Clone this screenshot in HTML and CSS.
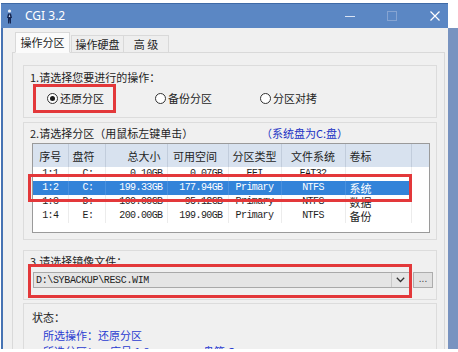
FILE: index.html
```html
<!DOCTYPE html>
<html lang="zh-CN">
<head>
<meta charset="utf-8">
<title>CGI 3.2</title>
<link rel="stylesheet" href="styles.css">
</head>
<body>
<div class="window">
  <div class="titlebar">
    <svg class="app-icon" width="9" height="15" viewBox="0 0 9 15">
      <circle cx="4.5" cy="2" r="1.6" fill="#e8eef8"/>
      <path d="M3 4.5 L6 4.5 L7 9 L6 9 L6 14.5 L4.8 14.5 L4.5 10 L4.2 14.5 L3 14.5 L3 9 L2 9 Z" fill="#14244f"/>
      <path d="M4.5 5 L5.3 8 L3.7 8 Z" fill="#c9d6ee"/>
    </svg>
    <span class="title">CGI 3.2</span>
    <div class="controls">
      <svg class="ctl ctl-min" width="10" height="10" viewBox="0 0 10 10"><path d="M0 5.5 H10" stroke="#d9e3f3" stroke-width="1"/></svg>
      <svg class="ctl ctl-max" width="10" height="10" viewBox="0 0 10 10"><rect x="0.5" y="0.5" width="9" height="9" fill="none" stroke="#86a4d2" stroke-width="1"/></svg>
      <svg class="ctl ctl-close" width="10" height="10" viewBox="0 0 10 10"><path d="M0.5 0.5 L9.5 9.5 M9.5 0.5 L0.5 9.5" stroke="#ffffff" stroke-width="1.2"/></svg>
    </div>
  </div>
  <div class="client">
    <div class="tabs">
      <div class="tab tab-active">操作分区</div>
      <div class="tab tab-2">操作硬盘</div>
      <div class="tab tab-3">高 级</div>
    </div>
    <div class="panel">
      <div class="group g1">
        <div class="label">1.请选择您要进行的操作：</div>
        <div class="radios">
          <div class="radio"><span class="dot on"></span><span class="rtext">还原分区</span></div>
          <div class="radio"><span class="dot"></span><span class="rtext">备份分区</span></div>
          <div class="radio"><span class="dot"></span><span class="rtext">分区对拷</span></div>
        </div>
        <div class="mark mark1"></div>
      </div>

      <div class="group g2">
        <div class="label label2"><span class="l2a">2.请选择分区（用鼠标左键单击）</span><span class="blue">（系统盘为C:盘）</span></div>
        <div class="listview">
          <table>
            <colgroup>
              <col class="w1"><col class="w2"><col class="w3"><col class="w4"><col class="w5"><col class="w6"><col class="w7"><col class="w8">
            </colgroup>
            <thead>
              <tr><th class="c1">序号</th><th class="c2">盘符</th><th class="c3">总大小</th><th class="c4">可用空间</th><th class="c5">分区类型</th><th class="c6">文件系统</th><th class="c7">卷标</th><th class="c8"></th></tr>
            </thead>
            <tbody>
              <tr><td class="c1">1:1</td><td class="c2">C:</td><td class="c3">0.10GB</td><td class="c4">0.07GB</td><td class="c5">EFI</td><td class="c6">FAT32</td><td class="c7"></td><td class="c8"></td></tr>
              <tr class="sel"><td class="c1">1:2</td><td class="c2">C:</td><td class="c3">199.33GB</td><td class="c4">177.94GB</td><td class="c5">Primary</td><td class="c6">NTFS</td><td class="c7 cjk">系统</td><td class="c8 blank"></td></tr>
              <tr><td class="c1">1:3</td><td class="c2">D:</td><td class="c3">100.00GB</td><td class="c4">95.12GB</td><td class="c5">Primary</td><td class="c6">NTFS</td><td class="c7 cjk">数据</td><td class="c8"></td></tr>
              <tr><td class="c1">1:4</td><td class="c2">E:</td><td class="c3">200.00GB</td><td class="c4">199.90GB</td><td class="c5">Primary</td><td class="c6">NTFS</td><td class="c7 cjk">备份</td><td class="c8"></td></tr>
            </tbody>
          </table>
        </div>
        <div class="mark mark2"></div>
      </div>

      <div class="group g3">
        <div class="label label3">3.请选择镜像文件：</div>
        <div class="comborow">
          <div class="combo">
            <span class="combotext">D:\SYBACKUP\RESC.WIM</span>
            <span class="arrow"><svg width="9" height="6" viewBox="0 0 9 6"><path d="M0.8 0.8 L4.5 4.5 L8.2 0.8" fill="none" stroke="#333" stroke-width="1.3"/></svg></span>
          </div>
          <div class="browse">...</div>
        </div>
        <div class="mark mark3"></div>
      </div>

      <div class="group g4">
        <div class="label">状态：</div>
        <div class="status">所选操作：还原分区</div>
        <div class="status status2"><span class="s1">所选分区：</span><span class="s2">序号 1:2</span><span>盘符 C:</span></div>
      </div>
    </div>
  </div>
</div>
</body>
</html>
```

FILE: styles.css
```css
html, body {
  margin: 0;
  padding: 0;
  width: 458px;
  height: 352px;
  overflow: hidden;
  background: #ffffff;
}

body {
  font-family: "Noto Sans CJK SC", "Noto Sans", sans-serif;
  font-size: 11px;
  color: #1e1e1e;
}

.window {
  margin: 3px 0 0 1px;
  width: 457px;
  display: flex;
  flex-direction: column;
}

.titlebar {
  height: 25px;
  box-sizing: border-box;
  margin-right: 10px;
  background: #5b87c4;
  border-top: 1px solid #3f6aa6;
  display: flex;
  align-items: center;
  color: #ffffff;
}

.app-icon {
  margin-left: 4px;
  flex: none;
}

.title {
  margin-left: 11px;
  font-family: "Noto Sans", sans-serif;
  font-size: 12px;
  line-height: 14px;
}

.controls {
  margin-left: auto;
  display: flex;
  align-items: center;
  margin-right: 8px;
}

.ctl { display: block; }
.ctl-max { margin-left: 32px; }
.ctl-close { margin-left: 33px; }

.client {
  background: #f0f0f0;
  border-left: 2px solid #4673b3;
  border-right: 10px solid #7893c0;
  height: 321px;
  overflow: hidden;
}

.tabs {
  display: flex;
  align-items: flex-end;
  padding: 5px 0 0 12px;
  height: 20px;
  box-sizing: content-box;
  margin-bottom: -1px;
  position: relative;
  z-index: 1;
}

.tab {
  height: 16px;
  line-height: 16px;
  border: 1px solid #d9d9d9;
  border-bottom: 1px solid #d9d9d9;
  background: #eeeeee;
  text-align: center;
  color: #1e1e1e;
}

.tab-active {
  width: 53px;
  height: 19px;
  line-height: 18px;
  background: #fbfbfb;
  border-bottom-color: #fbfbfb;
  margin-right: 1px;
}

.tab-2 { width: 51px; margin-right: -1px; }
.tab-3 { width: 44px; }

.panel {
  margin: 0 3px 0 9px;
  border: 1px solid #d9d9d9;
  background: #f0f0f0;
  padding: 12px 7px 0 10px;
  height: 300px;
}

.group {
  border: 1px solid #dcdcdc;
  position: relative;
}

.label {
  line-height: 14px;
  height: 14px;
  white-space: nowrap;
}

.g1 {
  padding: 4px 0 12px 6px;
}

.radios {
  margin-top: 7px;
  padding-left: 16px;
  display: grid;
  grid-template-columns: 108px 105px auto;
  height: 14px;
}

.radio {
  display: flex;
  align-items: center;
  line-height: 14px;
}

.dot {
  margin-left: 1px;
  width: 11px;
  height: 11px;
  box-sizing: border-box;
  border: 1px solid #333333;
  border-radius: 50%;
  background: #ffffff;
  display: flex;
  align-items: center;
  justify-content: center;
}

.dot.on::after {
  content: "";
  width: 5px;
  height: 5px;
  border-radius: 50%;
  background: #1a1a1a;
}

.rtext { margin-left: 2px; }

.mark {
  position: absolute;
  border: 3px solid #e3383a;
  box-sizing: border-box;
}

.mark1 { left: 9px; top: 18px; width: 83px; height: 29px; }

.g2 {
  margin-top: 4px;
  padding: 3px 0 6px 8px;
}

.label2 { margin-left: -2px; }
.l2a { display: inline-block; width: 231px; }
.blue { color: #2233c4; }

.listview {
  margin-top: 3px;
  width: 398px;
  height: 90px;
  box-sizing: border-box;
  border: 1px solid #9a9a9a;
  background: #ffffff;
  overflow: hidden;
}

table {
  border-collapse: collapse;
  table-layout: fixed;
  width: 396px;
}

.w1 { width: 35px; }
.w2 { width: 37px; }
.w3 { width: 62px; }
.w4 { width: 61px; }
.w5 { width: 53px; }
.w6 { width: 64px; }
.w7 { width: 66px; }
.w8 { width: 18px; }

th {
  height: 23px;
  padding: 0;
  background: #d8e2ef;
  font-weight: normal;
  border-right: 1px solid #c2cddc;
  color: #1e1e1e;
  white-space: nowrap;
}

td {
  height: 14px;
  padding: 0;
  line-height: 14px;
  font-family: "Liberation Mono", monospace;
  font-size: 10px;
  letter-spacing: -0.6px;
  border-right: 1px solid #ececec;
  white-space: nowrap;
  overflow: hidden;
  color: #1e1e1e;
}

td.cjk {
  font-family: "Noto Sans CJK SC", sans-serif;
  font-size: 11px;
  line-height: 14px;
  letter-spacing: 0;
}

.c1 { text-align: center; }
th.c2 { text-align: left; padding-left: 4px; }
td.c2 { text-align: left; padding-left: 14px; }
.c3 { text-align: right; padding-right: 4px; }
th.c3 { padding-right: 6px; }
td.c4 { text-align: right; padding-right: 5px; }
th.c4 { text-align: center; padding-right: 5px; }
.c5 { text-align: center; }
.c6 { text-align: center; }
.c7 { text-align: left; padding-left: 4px; }

tr.sel td {
  background: #3383d9;
  color: #ffffff;
  border-right-color: #4a91df;
}

tr.sel td.blank {
  background: #ffffff;
}

.mark2 { left: 4px; top: 51px; width: 384px; height: 28px; }

.g3 {
  margin-top: 10px;
  padding: 3px 0 11px 9px;
}

.label3 { margin-left: -3px; }

.comborow {
  margin-top: 4px;
  display: flex;
  height: 16px;
}

.combo {
  width: 377px;
  height: 16px;
  box-sizing: border-box;
  border: 1px solid #a9a9a9;
  background: #e5e5e5;
  display: flex;
  align-items: center;
}

.combotext {
  padding-left: 2px;
  font-family: "Liberation Mono", monospace;
  font-size: 10px;
  letter-spacing: -0.35px;
  color: #1e1e1e;
  flex: 1;
}

.arrow {
  width: 17px;
  height: 14px;
  display: flex;
  align-items: center;
  justify-content: center;
  border-left: 1px solid #c9c9c9;
}

.browse {
  margin-left: 3px;
  width: 20px;
  height: 16px;
  box-sizing: border-box;
  border: 1px solid #adadad;
  background: #e1e1e1;
  font-family: "Liberation Sans", sans-serif;
  font-size: 10px;
  line-height: 12px;
  text-align: center;
  color: #444;
}

.mark3 { left: 4px; top: 13px; width: 384px; height: 34px; }

.g4 {
  margin-top: 3px;
  padding: 6px 0 0 8px;
  height: 60px;
}

.status {
  margin-top: 4px;
  padding-left: 11px;
  line-height: 14px;
  color: #2a3cd0;
  white-space: nowrap;
}

.status2 { margin-top: 2px; }
.s1 { display: inline-block; width: 67px; }
.s2 { display: inline-block; width: 93px; }
```
